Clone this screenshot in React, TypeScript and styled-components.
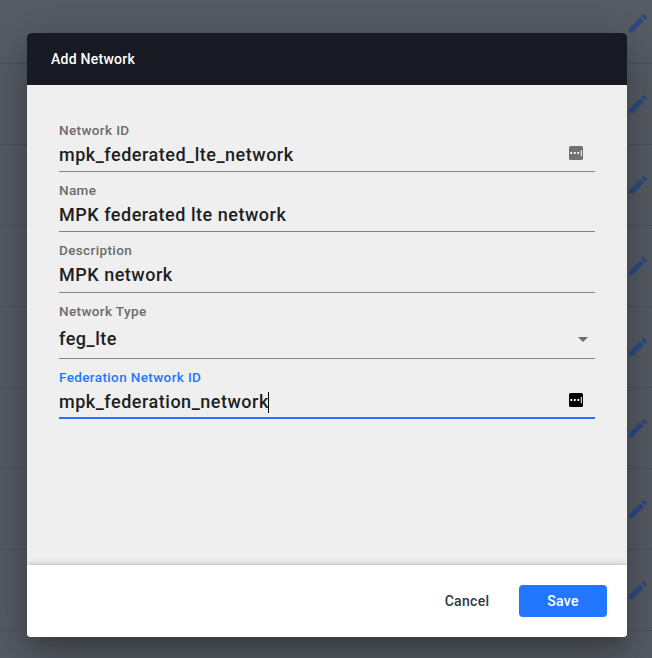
import React from 'react';
import styled, { createGlobalStyle } from 'styled-components';

const GlobalStyle = createGlobalStyle`
  * { box-sizing: border-box; }
  body { margin: 0; overflow: hidden; font-family: Roboto, "Liberation Sans", sans-serif; font-weight: 500; }
`;

const Page = styled.div`
  display: grid;
  width: 652px;
  height: 658px;
  overflow: hidden;
  background: #565b64;
  & > * { grid-area: 1 / 1; }
`;

const Table = styled.div`
  height: 658px;
  overflow: hidden;
`;

const TableRow = styled.div<{ $first?: boolean }>`
  display: flex;
  justify-content: flex-end;
  align-items: flex-start;
  height: ${p => (p.$first ? 64 : 81)}px;
  padding: ${p => (p.$first ? 11 : 28)}px 2px 0 0;
  border-bottom: 1px solid #4d5159;
`;

const EditIcon = styled.svg`
  width: 24px;
  height: 24px;
  fill: #2d4b82;
`;

const Dialog = styled.form`
  display: flex;
  flex-direction: column;
  width: 600px;
  height: 604px;
  margin: 33px 0 0 27px;
  border-radius: 4px;
  overflow: hidden;
  z-index: 1;
  background: #efefef;
  box-shadow: 0 11px 15px -7px rgba(0, 0, 0, 0.2), 0 24px 38px 3px rgba(0, 0, 0, 0.14),
    0 9px 46px 8px rgba(0, 0, 0, 0.12);
`;

const Header = styled.header`
  flex: 0 0 52px;
  padding-left: 24px;
  background: #171a22;
  color: #fff;
  font-size: 14px;
  line-height: 52px;
  letter-spacing: 0.25px;
`;

const Body = styled.main`
  flex: 1;
  padding: 27px 32px 0;
`;

const Field = styled.div<{ $height: number; $focused?: boolean }>`
  display: flex;
  flex-direction: column;
  height: ${p => p.$height}px;
  padding-top: 10px;
  border-bottom: ${p => (p.$focused ? '2px solid #2377ff' : '1px solid #848484')};
`;

const Label = styled.label<{ $focused?: boolean }>`
  color: ${p => (p.$focused ? '#2377ff' : '#6b6b6b')};
  font-size: 13.5px;
  line-height: 17px;
  letter-spacing: 0.375px;
`;

const ValueRow = styled.div<{ $offset?: number }>`
  display: flex;
  align-items: center;
  height: 22px;
  margin-top: ${p => p.$offset ?? 5}px;
  color: #1e1e1e;
  font-size: 18px;
  line-height: 22px;
  letter-spacing: 0.52px;
  white-space: pre;
`;

const Caret = styled.span`
  width: 1px;
  height: 21px;
  margin-left: -1px;
  background: #000;
`;

const AutofillIcon = styled.svg`
  width: 14px;
  height: 14px;
  margin: -4px 12px 0 auto;
`;

const ArrowIcon = styled.svg`
  width: 24px;
  height: 24px;
  margin-left: auto;
  fill: #6b6b6b;
`;

const Footer = styled.footer`
  display: flex;
  flex: 0 0 72px;
  justify-content: flex-end;
  align-items: center;
  gap: 8px;
  padding-right: 20px;
  background: #fff;
  box-shadow: 0 0 6px rgba(0, 0, 0, 0.3);
`;

const Button = styled.button<{ $primary?: boolean }>`
  width: 88px;
  height: 32px;
  padding: 0;
  border: 0;
  border-radius: 4px;
  background: ${p => (p.$primary ? '#2377ff' : 'transparent')};
  color: ${p => (p.$primary ? '#fff' : '#303846')};
  font: 500 14px/32px Roboto, sans-serif;
  letter-spacing: 0.3px;
`;

function Pencil() {
  return (
    <EditIcon viewBox="0 0 24 24">
      <path d="M3 17.25V21h3.75L17.81 9.94l-3.75-3.75L3 17.25zM20.71 7.04c.39-.39.39-1.02 0-1.41l-2.34-2.34c-.39-.39-1.02-.39-1.41 0l-1.83 1.83 3.75 3.75 1.83-1.83z" />
    </EditIcon>
  );
}

function Autofill({ color }: { color: string }) {
  return (
    <AutofillIcon viewBox="0 0 14 14">
      <rect width="14" height="14" rx="1.6" fill={color} />
      <path d="M1.4 6.1h1.8v1.8H1.4zM4.9 6.1h1.8v1.8H4.9zM8.4 6.1h1.8v1.8H8.4zM11.8 4h1v6.2h-1z" fill="#fff" />
    </AutofillIcon>
  );
}

export default function App() {
  return (
    <>
      <GlobalStyle />
      <Page>
        <Table>
          {Array.from({ length: 9 }, (_, i) => (
            <TableRow key={i} $first={i === 0}>
              {i < 8 && <Pencil />}
            </TableRow>
          ))}
        </Table>
        <Dialog>
          <Header>Add Network</Header>
          <Body>
            <Field $height={60}>
              <Label>Network ID</Label>
              <ValueRow>mpk_federated_lte_network<Autofill color="#717171" /></ValueRow>
            </Field>
            <Field $height={60}>
              <Label>Name</Label>
              <ValueRow>MPK federated lte network</ValueRow>
            </Field>
            <Field $height={61}>
              <Label>Description</Label>
              <ValueRow>MPK network</ValueRow>
            </Field>
            <Field $height={66}>
              <Label>Network Type</Label>
              <ValueRow $offset={8}>
                feg_lte
                <ArrowIcon viewBox="0 0 24 24"><path d="M7 10l5 5 5-5z" /></ArrowIcon>
              </ValueRow>
            </Field>
            <Field $height={60} $focused>
              <Label $focused>Federation Network ID</Label>
              <ValueRow>mpk_federation_network<Caret /><Autofill color="#000" /></ValueRow>
            </Field>
          </Body>
          <Footer>
            <Button type="button">Cancel</Button>
            <Button type="button" $primary>Save</Button>
          </Footer>
        </Dialog>
      </Page>
    </>
  );
}
